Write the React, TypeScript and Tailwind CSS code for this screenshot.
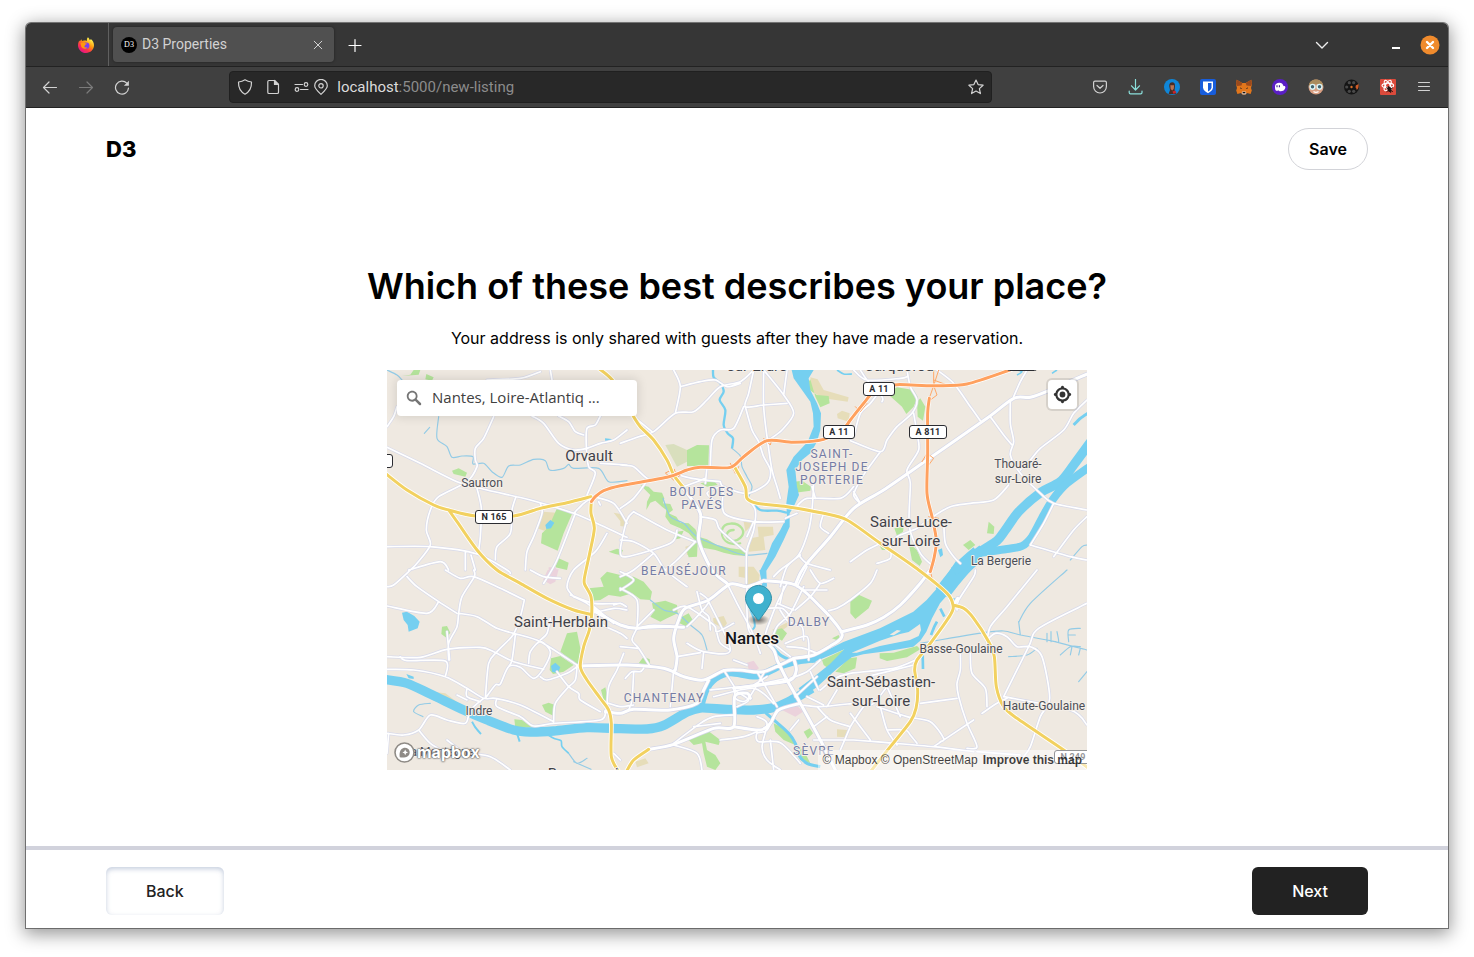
import { useState, type ReactNode } from "react";

/* Geometry of the map is drawn on a 2100 x 1200 grid, three units to a pixel. */

const parks: string[] = [
  "M45,18L95,14 100,0 80,0 70,14Z",
  "M118,12L140,22 135,32 115,28Z",
  "M195,302L215,295 240,308 235,320 200,312Z",
  "M510,415L555,432 530,490 512,542 462,520 465,490 485,470Z",
  "M515,565L545,578 540,600 505,592Z",
  "M665,545L690,536 708,540 702,556 685,552Z",
  "M900,240L930,225 966,226 964,288 900,288Z",
  "M760,345L785,350 800,365 825,368 832,385 828,400 850,402 858,420 845,430 868,440 880,458 905,460 925,478 935,500 960,508 990,525 1030,535 1075,540 1078,558 1040,555 1010,548 985,540 940,532 925,512 905,490 880,475 850,462 835,440 838,420 825,410 805,392 790,398 778,420 780,395 790,375Z",
  "M900,545L915,520 932,520 930,560 905,562Z",
  "M870,485L890,482 880,505 858,510Z",
  "M940,340L980,332 992,345 960,350Z",
  "M1270,28L1262,40 1268,60 1290,75 1325,78 1328,100 1300,112 1285,80Z",
  "M1222,335L1245,332 1272,350 1270,362 1225,368Z",
  "M1500,70L1530,52 1580,60 1592,80 1580,110 1558,132 1545,110Z",
  "M1590,95L1600,85 1615,110 1608,152 1592,140Z",
  "M1522,475L1550,470 1548,485 1530,497Z",
  "M1565,518L1590,540 1605,575 1598,588 1575,570 1570,545Z",
  "M1478,528L1495,525 1510,540 1485,540Z",
  "M1805,455L1822,470 1820,492 1800,490Z",
  "M1728,525L1750,510 1765,525 1745,540Z",
  "M605,655L650,650 640,625 660,605 700,615 740,620 770,635 795,665 790,690 760,688 735,670 700,680 665,675 640,690 615,692Z",
  "M795,700L835,692 870,705 872,730 840,745 820,755 790,740 800,725Z",
  "M885,740L905,730 920,755 895,768 878,760Z",
  "M165,770L180,768 190,788 178,803 163,792Z",
  "M540,790L570,785 580,835 575,885 550,870 520,845Z",
  "M492,865L520,858 560,885 530,905 498,912 488,900Z",
  "M465,1005L485,998 504,1005 500,1038 475,1025Z",
  "M382,1048L405,1050 435,1072 385,1075Z",
  "M642,960L655,952 665,995 650,990Z",
  "M755,880L770,860 788,868 790,888Z",
  "M1390,695L1415,674 1455,692 1445,715 1405,747 1390,730Z",
  "M1335,805L1355,795 1362,815Z",
  "M1305,870L1380,835 1365,865 1330,900 1310,885Z",
  "M1345,905L1385,865 1410,862 1405,895 1370,910Z",
  "M1478,850L1520,848 1590,828 1600,838 1560,862 1500,873 1478,865Z",
  "M1160,780L1185,775 1200,790 1185,812 1165,800Z",
  "M1160,1060L1190,1075 1215,1100 1225,1125 1190,1110 1165,1085Z",
  "M1250,1085L1268,1075 1278,1090 1262,1106Z",
  "M905,1110L940,1095 960,1080 980,1095 1000,1110 995,1125 955,1115 960,1140 985,1155 1000,1180 985,1200 960,1190 950,1150 945,1120 920,1125Z",
  "M1225,1145L1240,1130 1260,1160 1270,1180 1240,1170Z",
];

const sand: string[] = [
  "M470,425L508,428 500,455 485,470 472,482 450,475Z",
  "M1270,22L1292,28 1310,60 1385,82 1382,95 1310,85 1275,65Z",
  "M1350,132L1365,122 1388,130 1385,155 1352,145Z",
  "M1070,455L1095,458 1090,470 1075,485Z",
  "M1112,470L1158,470 1160,495 1130,500 1135,540 1085,545 1090,505 1115,500Z",
  "M680,428L700,432 720,450 720,465 705,460Z",
  "M700,445L725,450 715,470 700,468Z",
  "M895,530L930,520 928,555 900,555Z",
  "M1055,590L1100,590 1118,615 1115,640 1078,655 1080,625 1055,620Z",
  "M978,745L1010,738 1020,760 1010,775 980,760Z",
  "M1155,780L1205,755 1208,765 1180,785Z",
  "M135,965L175,970 215,1000 230,1012 190,1003 160,985Z",
  "M1350,1078L1380,1080 1378,1102 1350,1100Z",
  "M745,1175L775,1165 785,1180 750,1192Z",
];

const pinks: string[] = [
  "M482,600L515,598 505,635 490,643 468,630Z",
  "M1080,878L1100,872 1116,895 1105,903 1085,898Z",
  "M1185,1020L1225,1002 1248,1025 1225,1040Z",
  "M485,592L505,592 510,600 485,600Z",
];

const waterAreas: string[] = [
  "M475,465L490,450 502,458 492,475 478,477Z",
  "M654,205L680,208 668,217 655,217Z",
  "M45,728L60,725 82,738 98,755 92,775 65,785 62,765 50,750Z",
  "M58,912L80,920 80,927 65,925Z",
  "M492,888L505,878 520,892 512,910 495,905Z",
  "M1653,540L1665,535 1668,555 1660,562Z",
  "M1214,0L1280,0 1265,25 1270,60 1290,100 1302,130 1300,180 1290,215 1270,250 1245,270 1225,300 1230,350 1236,375 1220,410 1208,430 1208,470 1190,510 1165,560 1138,602 1140,650 1126,650 1120,600 1140,560 1155,520 1180,480 1200,440 1198,400 1205,350 1198,300 1220,260 1262,215 1280,170 1278,130 1270,95 1245,60 1220,25Z",
  "M1269,866L1369,816 1479,775 1579,725 1619,690 1659,645 1709,570 1769,570 1735,615 1699,655 1659,700 1635,745 1618,785 1600,812 1579,830 1509,842 1429,853 1394,862 1349,897 1289,952 1250,978 1235,955 1279,922 1329,882 1372,838 1330,856 1275,878Z",
];

const islands: string[] = [
  "M1394,848L1479,812 1539,792 1565,786 1599,762 1602,780 1595,798 1569,810 1479,828 1409,848Z",
  "M1508,794L1530,780 1542,782 1520,796Z",
];

const rivers: { d: string; w: number }[] = [
  { w: 28, d: "M-10,928L60,940 130,972 230,1020 300,1050 380,1080 430,1086 500,1083 600,1073 700,1076 780,1077 830,1066 900,1026 940,1014 1000,1017 1100,1020 1170,1010 1220,987 1275,955" },
  { w: 21, d: "M940,1014L957,960 985,925 1030,908 1110,918 1180,888 1240,872 1285,867" },
  { w: 48, d: "M1665,670L1700,625 1735,585 1775,550" },
  { w: 28, d: "M1700,605L1780,545 1830,512 1855,480 1895,425 1960,368 2020,335 2060,285 2115,210" },
  { w: 24, d: "M1770,550L1860,537 1905,528 1935,500 1970,435 2000,385 2040,340 2115,285" },
  { w: 8, d: "M1660,716L1672,740M1650,755L1642,770 1632,795M1607,850L1608,897M1700,705L1702,685" },
  { w: 9, d: "M2060,165L2080,145 2105,128M1780,530L1740,560" },
  { w: 9, d: "M1156,830L1180,855 1205,868M1135,1028L1170,1058 1205,1090 1225,1120 1235,1155 1260,1180 1300,1190" },
  { w: 7, d: "M978,0L980,22 1000,40 1010,65 998,90 1015,120 1010,165 1022,190 1038,205 1035,235M1090,390L1120,420 1170,422 1200,428" },
  { w: 6, d: "M1120,600L1130,650M1090,720L1100,745 1103,770 1090,785M255,1055L265,1072 282,1092M390,1090L398,1115" },
  { w: 5, d: "M480,1093L500,1105 522,1112 525,1130 545,1150M1890,0L1905,5 1890,15M1350,0L1370,12 1395,12M1995,10L2010,0" },
];

const streams =
  "M155,140L150,205 180,230 195,262 225,258 258,260 258,282 290,280 315,305 345,322 365,288 400,285 440,268 475,272 488,300 530,295 545,283 560,295 635,295 665,335 720,332" +
  "M112,190L128,172M1035,235L1060,258 1065,290 1080,320 1095,350 1085,380" +
  "M828,385L850,440 890,460 930,500 1000,530 1070,555 1140,550M790,690L830,720 870,730 910,765 945,795 960,840" +
  "M545,1150L570,1180 600,1165M560,1175L612,1198M130,1000L95,1005 80,1025 108,1040" +
  "M1600,820L1790,788 1850,783 1900,795 1990,812 2100,840M1895,755L1900,795M1895,757L1930,700 2040,600M1865,860L1920,855 1950,835" +
  "M1980,790L1980,815M1992,785L1992,815M2010,785L2015,815 2005,815M2045,815L2045,780 2080,775M2045,795L2065,795M2020,855L2050,830 2080,830M2050,855L2055,830M2075,855L2080,835M2075,935L2100,905" +
  "M0,0L30,15 45,30M2050,570L2085,530 2100,525";

const minorRoads: string[] = [
  "M0,170L20,140 30,110M320,140L290,205 265,235 265,270 270,290 240,335 155,380 130,420 118,480 130,525 90,580 70,600 20,645 0,650",
  "M0,232L100,280 210,335 300,360 430,390 560,430 640,465 720,502M270,355L283,415 280,500 275,540M387,380L375,420 370,490 330,530 325,570",
  "M460,400L465,430 440,500 420,545 415,600M0,530L130,530 270,552 360,600 370,610M65,600L160,575 185,600M235,545L235,600M252,555L265,600",
  "M435,138L470,160 515,220 560,240 600,235 640,220 680,210 720,180M515,138L545,155 565,185 590,195M640,138L625,165 600,175 598,230 605,290 625,310 600,375M640,280L720,285",
  "M300,30L400,25 460,5M490,0L495,30M620,380L680,400 720,460M635,395L640,405M560,430L590,400 612,385M565,430L510,570 470,640M660,490L625,545 560,600 540,650 560,680",
  "M175,600L220,625 260,620 340,655 412,690M260,600L262,620 225,680 215,730 210,770 185,820 185,870M60,620L90,650 155,695 210,730M0,708L120,730 155,695M215,730L270,740 330,775 380,790 460,815 570,885M0,860L100,862 180,838 280,832 320,845 380,875 470,898",
  "M412,690L400,740 378,795 330,845 305,880 295,985M385,795L375,870 365,890M40,860L60,872 175,873 175,920M0,898L80,900 175,920 240,955 290,985 325,985 400,1005 500,1055M180,785L188,870M430,600L470,620 520,625",
  "M330,985L330,1010 400,1040 440,1068 500,1060 640,1050 655,1020M290,985L250,1020 235,1060 180,1050 130,1035 95,1080 50,1095 0,1090M240,955L240,980 280,995M210,975L240,990M95,1080L130,1120 180,1150M5,1090L0,1150M180,1110L230,1145 310,1160 370,1200",
  "M295,985L325,945 340,942 365,890 400,892 440,925 470,895 490,845 460,815 430,845 425,880M460,920L480,930 540,910 570,890M510,905L545,950 575,970 580,990 640,1025M545,950L505,1000 500,1055M570,890L565,930 545,950",
  "M560,680L600,700 635,730 640,760 700,790 720,805M610,700L680,760M490,745L480,790 460,810M615,730L680,715 720,720M680,705L700,700 718,710M550,675L620,700 700,700",
  "M700,220L755,200 800,185 865,130 920,125 960,90 1000,50 1060,35 1100,0M740,140L795,185M860,0L880,50 865,130M880,50L940,35 985,30 1020,50 1060,40M700,285L740,290 790,330 860,315M700,415L740,385 775,340",
  "M1130,0L1130,110 1140,200 1155,300 1170,350 1180,385M1100,0L1085,70 1075,110 1130,105 1200,100M1075,110L1095,180 1115,215 1130,260 1150,300 1140,340 1080,370 1010,350 1000,335M970,290L975,210 1000,180 1040,175 1070,110M1130,0L1190,75 1220,130 1185,180 1145,210M1200,0L1190,75",
  "M1010,350L1012,430 1100,455 1190,455M860,310L915,325 1000,335M890,350L930,335 955,325M960,290L955,340M1000,350L960,370 1005,410M740,425L840,480 925,515M740,425L720,450 700,540 720,560 850,520 870,480M940,440L985,450 1000,480 1075,545",
  "M1080,385L1105,420 1100,480 1080,540 1078,600 1078,640M1100,455L1080,500M700,510L740,515 800,550 835,600 900,650M800,550L740,600 700,620M925,515L870,570 835,600M1225,415L1260,385 1360,385 1400,350M1280,340L1275,420 1265,480 1235,555 1180,600 1160,620M1275,350L1285,385",
  "M1310,430L1300,470 1325,490M1235,555L1260,580 1330,600M1400,365L1420,400M1195,445L1230,430M1240,555L1200,590 1180,650",
  "M1420,0L1440,30 1485,80 1485,95M1400,200L1420,130 1450,100 1480,60M1390,212L1480,245 1500,210 1530,170 1575,130 1590,90 1570,50 1560,0M1480,245L1440,300 1420,330 1400,375 1420,400M1580,130L1590,190 1595,240 1560,300 1570,340 1567,470 1600,550 1640,590",
  "M1650,0L1700,40 1750,110 1780,152M1870,90L1870,160 1880,215 1870,255 1900,310 1960,370 2000,400 2100,420M1810,140L1850,195 1875,225M2100,90L2060,130 2030,180 1960,235 1930,270 1900,300M1920,0L1900,35 1880,80M1865,345L1820,390 1750,400 1690,410 1630,445 1590,475 1530,500 1500,530",
  "M1670,450L1675,520 1700,560 1720,580M1930,525L2050,560 2100,570M2000,400L1970,460 1930,525M2000,560L2060,480 2100,440M1390,575L1440,540 1480,520M1400,0L1440,30 1540,25 1560,20M1510,530L1510,565 1470,580",
  "M1470,600L1450,640 1390,690 1350,715 1325,722M1765,600L1760,620 1715,690 1710,720M1950,600L1860,710 1810,770 1800,820M2100,700L1955,775 1925,830 1850,980M1800,810L1825,790 1860,800 1890,830 1930,830 1965,860 1988,985 1960,1040 1930,1130 1910,1160",
  "M1720,850L1720,900 1710,940 1715,980 1740,1060 1770,1130 1740,1135M1750,850L1755,910 1795,955 1800,1010M1785,1030L1830,1000 1860,985M1600,1000L1710,985M1760,1050L1640,1130M1470,1010L1560,1040 1630,1055 1670,1105 1660,1115M1850,980L2050,1020 2100,1065",
  "M1480,1010L1500,1080 1530,1125M1500,1080L1555,1080 1570,1095 1590,1120M1390,1030L1450,1110M1400,1110L1500,1118 1640,1130 1760,1145M1390,1070L1430,1010 1460,1000 1500,950M1300,960L1345,925 1390,910 1520,895 1590,868M1440,920L1580,885M1500,950L1540,1040M1770,1145L1900,1155",
  "M750,775L735,810 755,835 790,890M700,655L750,690 750,775M700,830L755,835M750,775L870,770M800,720L750,770M900,770L930,740 965,695 940,670M860,720L900,710 980,765 990,785 1040,760M930,665L945,720 965,740 970,780M965,695L1030,840 950,845 900,820",
  "M1020,640L1050,700 1095,785 1120,850M950,845L945,895M870,860L940,848M1080,655L1080,725 1090,790 1160,825M1040,870L1080,885M1200,640L1170,700 1150,750 1135,800 1165,825M1250,650L1210,730 1170,770 1150,820M1140,715L1185,715 1210,740M1170,700L1220,720",
  "M1195,820L1260,800 1265,870M1200,830L1250,835 1290,850M1165,825L1210,860M1030,840L1000,820 990,790M970,960L1100,945 1200,925M980,980L1100,955 1160,1000M1040,960L1085,990 1050,1010M1110,905L1150,975 1170,1010M1100,945L1140,920M1130,910L1080,990 1045,985 1045,960",
  "M1045,955L1010,900M1210,925L1260,905 1300,870M1225,980L1290,920M1270,905L1295,960M1260,980L1310,1005M1170,1020L1140,1080 1110,1090 1115,1115 1180,1118 1240,1180M1110,1040L1140,1060 1125,1130 1140,1170 1180,1200M860,1120L940,1060 980,1040 1040,1035M920,1070L1000,1060",
  "M1245,1005L1300,1010 1400,1000M1290,1010L1330,1050 1390,1070M1280,1070L1320,1040M1280,1110L1400,1110M1350,960L1320,1010M1390,1070L1360,1140M1235,1050L1210,1080M1150,1110L1160,1200M860,1125L930,1150 945,1200M1000,1110L1070,1100 1110,1085M700,1170L680,1150",
  "M715,925L735,905 760,905 770,895M740,905L735,990 725,1020M660,1020L665,950 690,900 710,850M665,1000L700,1010 740,1005M850,1010L860,900M700,605L740,630 700,660",
  "M1260,590L1230,650M1270,600L1300,640 1340,625M1300,640L1270,680 1225,720M1245,660L1320,660M1179,720L1205,755 1245,770 1250,810M1190,650L1179,700",
];

const majorRoads =
  "M2105,10L1990,60 1930,82 1880,85 1800,145 1620,270 1490,360 1400,415 1330,500 1260,580 1240,610 1225,645" +
  "M1130,632L1080,650 1030,642 965,690 895,715 875,750 860,805 870,860 865,900" +
  "M1130,632L1225,645 1300,710 1360,780 1362,805 1330,828 1280,855 1220,865M1362,786L1440,765 1490,742 1540,705 1600,640 1625,605" +
  "M885,350L940,430 935,510 975,600 1020,640M620,722L700,765 750,775 800,768 890,772" +
  "M570,888L720,885 830,895 890,920 950,930 1010,902 1060,900 1130,905 1220,865" +
  "M1170,870L1200,930 1240,1000 1300,1110 1345,1200M1220,865L1228,900 1210,930 1120,945 1040,955" +
  "M655,1025L700,1030 740,1018 850,1020 930,1000 950,960 965,930M1170,870L1160,840 1130,810" +
  "M785,1138L860,1123 980,1075 1040,1070 1043,980 1080,970 1090,985M1040,1070L1120,1080 1150,1060 1175,1020 1240,1000M1700,705L1712,685";

const yellowRoads =
  "M-5,310L60,360 140,405 185,420 265,438 380,438 460,415 540,398 612,380" +
  "M185,420L210,455 270,540 330,600 400,640 480,685 560,720 612,733" +
  "M613,395L612,430 622,475 608,550 595,610 592,640 612,680 614,733 607,780 590,830 580,890 600,930 640,985 665,1020 673,1060 673,1160 695,1205" +
  "M635,-5L680,35 740,140 760,170 800,210 840,270 860,315 887,350" +
  "M1045,295L1075,350 1080,385 1110,400 1200,410 1310,430 1380,450 1480,520 1595,600 1680,670 1698,705 1690,735 1630,820 1590,870 1583,900 1592,960 1587,1015 1570,1055 1510,1130 1450,1205" +
  "M1698,705L1730,715 1760,745 1805,815 1822,860 1828,950 1850,1010 1890,1045 2030,1140 2105,1195M718,1205L740,1170 785,1138";

const orangeRoads =
  "M613,395L625,380 650,362 700,347 840,322 900,300 940,292 1030,292 1070,260 1140,212 1220,217 1310,208 1370,175 1390,150 1430,100 1470,55 1530,44 1640,47 1740,42 1875,-2" +
  "M1627,85L1622,130 1622,250 1620,370 1635,440 1648,510 1642,560 1630,605";

const ramps =
  "M1640,0L1640,47 1625,90M1655,0L1640,47 1650,75 1630,90M1640,30L1680,45M836,310L860,330 880,315 855,300ZM862,298L870,335M1030,280L1045,310 1055,290M1130,205L1150,225 1155,205M1605,275L1620,250 1640,265 1625,285M1625,440L1655,445 1635,460M1405,110L1420,125 1440,100M1630,600L1635,625";

/* Rounds the corners of "Mx,yLx,y x,y" runs with a spline through every point. */
function smooth(d: string): string {
  return d
    .split("M")
    .filter(Boolean)
    .map((run) => {
      const p = run
        .replace("Z", "")
        .split(/[L ]/)
        .filter(Boolean)
        .map((s) => s.split(",").map(Number));
      let out = `M${p[0][0]},${p[0][1]}`;
      for (let i = 0; i < p.length - 1; i++) {
        const a = p[i - 1] ?? p[i];
        const b = p[i];
        const c = p[i + 1];
        const e = p[i + 2] ?? c;
        const k = 7;
        out += `C${b[0] + (c[0] - a[0]) / k},${b[1] + (c[1] - a[1]) / k} ${c[0] - (e[0] - b[0]) / k},${c[1] - (e[1] - b[1]) / k} ${c[0]},${c[1]}`;
      }
      return out;
    })
    .join("");
}

const minor = smooth(minorRoads.join(""));
const major = smooth(majorRoads);
const yellow = smooth(yellowRoads);
const orange = smooth(orangeRoads);

interface Label {
  x: number;
  y: number;
  lines: string[];
  kind: "town" | "village" | "district" | "city";
}

const labels: Label[] = [
  { x: 202, y: 91, lines: ["Orvault"], kind: "town" },
  { x: 174, y: 257, lines: ["Saint-Herblain"], kind: "town" },
  { x: 524, y: 157, lines: ["Sainte-Luce-", "sur-Loire"], kind: "town" },
  { x: 494, y: 317, lines: ["Saint-Sébastien-", "sur-Loire"], kind: "town" },
  { x: 370, y: 1, lines: ["sur-Erdre"], kind: "town" },
  { x: 512, y: 1, lines: ["Carquefou"], kind: "town" },
  { x: 200, y: 409, lines: ["Bouguenais"], kind: "town" },
  { x: 95, y: 117, lines: ["Sautron"], kind: "village" },
  { x: 92, y: 345, lines: ["Indre"], kind: "village" },
  { x: 52, y: 386, lines: ["La Montagne"], kind: "village" },
  { x: 631, y: 98, lines: ["Thouaré-", "sur-Loire"], kind: "village" },
  { x: 614, y: 195, lines: ["La Bergerie"], kind: "village" },
  { x: 574, y: 283, lines: ["Basse-Goulaine"], kind: "village" },
  { x: 657, y: 340, lines: ["Haute-Goulaine"], kind: "village" },
  { x: 315, y: 126, lines: ["BOUT DES", "PAVÉS"], kind: "district" },
  { x: 445, y: 88, lines: ["SAINT-", "JOSEPH DE", "PORTERIE"], kind: "district" },
  { x: 297, y: 205, lines: ["BEAUSÉJOUR"], kind: "district" },
  { x: 422, y: 256, lines: ["DALBY"], kind: "district" },
  { x: 277, y: 332, lines: ["CHANTENAY"], kind: "district" },
  { x: 427, y: 385, lines: ["SÈVRE"], kind: "district" },
  { x: 365, y: 274, lines: ["Nantes"], kind: "city" },
];

const labelStyles: Record<Label["kind"], { cls: string; leading: number }> = {
  town: { cls: "fill-[#3f4148] text-[15px]", leading: 19 },
  village: { cls: "fill-[#4c4e56] text-[12px]", leading: 15 },
  district: { cls: "fill-[#747ca5] text-[12px] tracking-widest", leading: 13 },
  city: { cls: "fill-[#15161a] text-[17px] font-medium", leading: 20 },
};

const shields = [
  { x: 107, y: 147, w: 37, text: "N 165" },
  { x: 492, y: 19, w: 31, text: "A 11" },
  { x: 452, y: 62, w: 31, text: "A 11" },
  { x: 541, y: 62, w: 37, text: "A 811" },
  { x: -10, y: 91, w: 31, text: "" },
  { x: 635, y: -6, w: 30, text: "" },
  { x: 686, y: 387, w: 37, text: "N 249" },
];

function MapCanvas() {
  return (
    <svg viewBox="0 0 700 400" className="block h-full w-full bg-[#efe9e1]" role="img" aria-label="Map of Nantes" preserveAspectRatio="xMidYMid slice">
      <svg width="700" height="400" viewBox="0 0 2100 1200" fill="none" strokeLinejoin="round" strokeLinecap="round">
        <path d={sand.join("")} fill="#e6ddb9" />
        <path d={parks.join("")} fill="#b5e49c" />
        <path d={pinks.join("")} fill="#ebd2dc" />
        <path d="M835,225L860,222 900,240 900,275 870,290Z" fill="#d9dfbd" />
        <path d="M1005,480C1010,455 1050,455 1065,475C1078,495 1050,520 1030,510C1010,500 1020,480 1040,480" stroke="#b5e49c" strokeWidth="7" />
        <path d="M1005,480C1000,505 1020,530 1060,520" stroke="#b5e49c" strokeWidth="6" />
        <path d={smooth(streams)} stroke="#93cbe6" strokeWidth="3.5" />
        <path d={waterAreas.join("")} fill="#75cff0" />
        {rivers.map((r) => (
          <path key={r.d} d={smooth(r.d)} stroke="#75cff0" strokeWidth={r.w} strokeLinecap="butt" />
        ))}
        <path d={islands.join("")} fill="#efe9e1" />
        <path d={minor} stroke="#d8daea" strokeWidth="9" />
        <path d={major} stroke="#d3d6e8" strokeWidth="13" />
        <path d={minor} stroke="#fff" strokeWidth="5" />
        <path d={major} stroke="#fff" strokeWidth="9" />
        <path d={ramps} stroke="#ffa868" strokeWidth="3" />
        <path d={yellow} stroke="#fff" strokeWidth="14" />
        <path d={yellow} stroke="#f2d160" strokeWidth="9" />
        <path d={orange} stroke="#fff" strokeWidth="13" />
        <path d={orange} stroke="#ffa15f" strokeWidth="9" />
      </svg>
      <g className="font-['Roboto','Liberation_Sans',sans-serif]" textAnchor="middle">
        {labels.map((l) => (
          <text key={l.lines.join()} className={labelStyles[l.kind].cls} stroke="#f4efe9" strokeWidth="2" strokeLinejoin="round" paintOrder="stroke">
            {l.lines.map((line, i) => (
              <tspan key={line} x={l.x} y={l.y + i * labelStyles[l.kind].leading}>
                {line}
              </tspan>
            ))}
          </text>
        ))}
        {shields.map((s) => (
          <g key={`${s.x}-${s.y}`}>
            <rect x={s.x - s.w / 2} y={s.y - 6.5} width={s.w} height="13" rx="2.5" fill="#fff" stroke="#2b2c31" />
            <text x={s.x} y={s.y + 3} className="fill-[#2b2c31] text-[9px] font-bold tracking-wide">
              {s.text}
            </text>
          </g>
        ))}
      </g>
      <defs>
        <radialGradient id="pin-shadow">
          <stop offset="0.1" stopOpacity="0.5" />
          <stop offset="1" stopOpacity="0" />
        </radialGradient>
      </defs>
      <g transform="translate(358 215)">
        <ellipse cx="13.5" cy="34.8" rx="11" ry="5.5" fill="url(#pin-shadow)" />
        <path fill="#3fb1ce" stroke="#3190a8" d="M26.5,13.5C26.5,19 20.2,26.8 14.7,34.2C14,35.2 13,35.2 12.3,34.2C6.8,26.8 .5,19.2 .5,13.5C.5,6.3 6.3,.5 13.5,.5S26.5,6.3 26.5,13.5Z" />
        <circle cx="13.5" cy="13.5" r="5.5" fill="#fff" />
      </g>
    </svg>
  );
}

function Glyph({ children }: { children: ReactNode }) {
  return (
    <svg viewBox="0 0 16 16" className="size-4 shrink-0" fill="none" stroke="currentColor" strokeWidth="1.2" strokeLinecap="round" strokeLinejoin="round" aria-hidden="true">
      {children}
    </svg>
  );
}

function FirefoxLogo() {
  return (
    <svg viewBox="0 0 16 16" className="size-4" aria-hidden="true">
      <defs>
        <linearGradient id="fx" x1="0.85" y1="0.1" x2="0.25" y2="0.95">
          <stop offset="0.05" stopColor="#fff44f" />
          <stop offset="0.4" stopColor="#ff980e" />
          <stop offset="0.7" stopColor="#ff3647" />
          <stop offset="1" stopColor="#e31587" />
        </linearGradient>
      </defs>
      <path fill="url(#fx)" d="M10 .2c1 .9 1.6 2 1.800 3 .8-.3 1-.9 1-1.100C14.800 3.700 16 5.900 16 8.300 16 12.600 12.400 16 8 16S0 12.500 0 8.200c0-1.900.7-3.600 1.500-4.600l.3 1c.5-.8 1-1.500 1.400-2.400.3.9.8 1.500 1.400 1.900C6 3.300 8 3.600 9 4c-.3-1.400 0-2.800 1-3.800Z" />
      <circle cx="8.2" cy="8.6" r="3.2" fill="#7b3ff2" />
      <path fill="#ff980e" d="M2.500 6.200C4 5 6 5.200 7.200 6.300L9 6.600c-.2 1-1.500 1-1.900 1.300-.4.7-.3 1.500-1 1.900.7.9 2 1 3.300.4C8 12.500 4.500 12 3.300 9.800Z" />
    </svg>
  );
}

const extensions: { name: string; art: ReactNode }[] = [
  {
    name: "Profile",
    art: (
      <>
        <circle cx="8" cy="8" r="8" fill="#0f86d8" />
        <path d="M4.500 15.200 6 11 5.200 7c0-2.800 1.400-3.800 3-3.800s3 1 2.800 3.800L10.600 11l1.400 4Z" fill="#4b2d25" />
        <path d="M6.300 6.200h3.800L9.700 10 8.200 11.500 6.700 10Z" fill="#b87455" />
        <path d="M8.500 12.500 11 11.500l1.500 2-3 1.500Z" fill="#c9252b" />
      </>
    ),
  },
  {
    name: "Password manager",
    art: (
      <>
        <rect width="16" height="16" rx="2" fill="#175ddc" />
        <path d="M3 2.500h10v5.800c0 2.900-2.500 4.600-5 5.900-2.500-1.300-5-3-5-5.900Z" fill="#fff" />
        <path d="M8 4h3.500v4.300c0 2-1.800 3.200-3.500 4.200Z" fill="#175ddc" />
      </>
    ),
  },
  {
    name: "Wallet",
    art: (
      <>
        <path d="M.7.8 6.300 4h3.400L15.300.8 16 5l-1 4 .8 2.500-1.200 3.500-3.600-1-1.500 1.500h-3L5 14l-3.600 1L.2 11.500 1 9 0 5Z" fill="#e2761b" />
        <path d="M.7.8 6.300 4 5.500 6.500 1.200 7 0 5ZM15.300.8 9.700 4l.8 2.500 4.300.5L16 5Z" fill="#9b4a1d" />
        <path d="m4 8.300 2.200 1.200L4.700 10ZM12 8.300 9.800 9.500l1.500.5Z" fill="#3b2a24" />
        <path d="M6 12.500h4l.3 2-1 1H6.700l-1-1Z" fill="#d7c1b3" />
        <path d="M6.700 13h2.600v1.300H6.700Z" fill="#161616" />
      </>
    ),
  },
  {
    name: "Ghost",
    art: (
      <>
        <circle cx="8" cy="8" r="8" fill="#5a1fc4" />
        <path d="M3 7.500C3 5 5 3.800 7.300 3.800c2.600 0 3.900 1.700 4.300 3.400.8-.3 2.200.2 1.700 1.800-.5 2-2.600 3.400-5 3.300-.9 0-1.200-.8-2-.8s-1.400.6-2.200.2C3 11 3 9 3 7.500Z" fill="#fff" />
        <path d="M5 6.300v2M7.400 6.300v2" stroke="#3c1594" strokeWidth="1.1" />
      </>
    ),
  },
  {
    name: "Avatar",
    art: (
      <>
        <circle cx="8" cy="8" r="7.500" fill="#d99f83" />
        <path d="M.8 7C1 3 4 .6 8 .6S15 3 15.200 7L12 5 4 5.500Z" fill="#a98b5d" />
        <circle cx="4.5" cy="7.8" r="2.4" fill="#44636e" stroke="#d8f3f5" strokeWidth="1.4" />
        <circle cx="11.5" cy="7.8" r="2.4" fill="#44636e" stroke="#d8f3f5" strokeWidth="1.4" />
        <path d="M5.500 12.500c1.500 1 3.500 1 5 0" stroke="#fff" strokeWidth="1.2" fill="none" />
      </>
    ),
  },
  {
    name: "Film reel",
    art: (
      <>
        <circle cx="7.5" cy="8" r="7.5" fill="#151515" />
        <g fill="#4a4a4a">
          <circle cx="5.3" cy="3.7" r="1.6" />
          <circle cx="9.7" cy="3.7" r="1.6" />
          <circle cx="2.7" cy="8" r="1.6" />
          <circle cx="5.3" cy="12.3" r="1.6" />
          <circle cx="9.7" cy="12.3" r="1.6" />
        </g>
        <circle cx="7.5" cy="8" r="1.2" fill="#d8702a" />
        <path d="M12 6c1 .5 2-.5 2.300-1.500.8 2.500.2 5-1.500 6.500 0-1.500-1.300-2-1.300-3Z" fill="#d05c28" />
      </>
    ),
  },
  {
    name: "React tools",
    art: (
      <>
        <rect width="16" height="16" rx="1" fill="#db4a3b" />
        <g fill="none" stroke="#fff" strokeWidth="1.2">
          <ellipse cx="7.8" cy="6.5" rx="5.8" ry="2.3" />
          <ellipse cx="7.8" cy="6.5" rx="5.8" ry="2.3" transform="rotate(60 7.8 6.5)" />
          <ellipse cx="7.8" cy="6.5" rx="5.8" ry="2.3" transform="rotate(120 7.8 6.5)" />
        </g>
        <ellipse cx="9.5" cy="10.3" rx="2" ry="2.8" fill="#26120f" transform="rotate(-25 9.5 10.3)" />
        <path d="m6 8.500 7 4.300M6.500 12.800 13 8.500M8.500 7l2.300 7" stroke="#26120f" strokeWidth="0.8" />
      </>
    ),
  },
];

function BrowserChrome() {
  return (
    <div className="font-['Roboto','Liberation_Sans',sans-serif] text-[#d2d2d2]">
      <div className="flex h-11 items-stretch border-b border-[#222] bg-[#363636]">
        <div className="flex w-[83px] items-center justify-end border-r border-[#606060] pr-[14px]">
          <FirefoxLogo />
        </div>
        <div className="my-1 ml-1 flex w-[221px] items-center rounded-[4px] bg-[#505050] px-2 shadow-[0_0_3px_rgba(0,0,0,0.4)]">
          <span className="flex size-4 items-center justify-center rounded-full bg-black font-['Liberation_Serif',serif] text-[8px] text-white">D3</span>
          <span className="ml-[5px] flex-1 text-[14px]">D3 Properties</span>
          <button type="button" aria-label="Close tab" className="flex size-4 items-center justify-center">
            <Glyph>
              <path d="m4.200 4.200 7.600 7.600M11.800 4.200l-7.600 7.600" strokeWidth="1" />
            </Glyph>
          </button>
        </div>
        <button type="button" aria-label="New tab" className="ml-[13px] flex w-4 items-center justify-center text-white">
          <Glyph>
            <path d="M8 2.500v12M2 8.500h12" />
          </Glyph>
        </button>
        <div className="flex-1" />
        <button type="button" aria-label="List all tabs" className="flex w-4 items-center text-[#eee]">
          <Glyph>
            <path d="m2.500 5.500 5.500 5.500 5.500-5.500" strokeWidth="1.4" />
          </Glyph>
        </button>
        <button type="button" aria-label="Minimize" className="ml-[58px] flex w-4 items-center text-white">
          <Glyph>
            <path d="M4 11h8" strokeWidth="2" strokeLinecap="butt" />
          </Glyph>
        </button>
        <button type="button" aria-label="Close window" className="mr-2 ml-4 flex w-5 items-center">
          <svg viewBox="0 0 20 20" className="size-5" aria-hidden="true">
            <circle cx="10" cy="10" r="9.500" fill="#f08b2d" />
            <path d="m7 7 6 6M13 7l-6 6" stroke="#fff" strokeWidth="2.4" strokeLinecap="round" />
          </svg>
        </button>
      </div>
      <div className="flex h-[41px] items-center border-b border-[#222] bg-[#404040]">
        <div className="flex flex-[187] items-center gap-5 pl-4">
          <button type="button" aria-label="Go back">
            <Glyph>
              <path d="M14.500 8.500H1.800M7 3 1.500 8.500 7 14" />
            </Glyph>
          </button>
          <button type="button" aria-label="Go forward" className="text-[#7b7b7b]">
            <Glyph>
              <path d="M1.500 8.500h12.700M9 3l5.500 5.500L9 14" />
            </Glyph>
          </button>
          <button type="button" aria-label="Reload">
            <Glyph>
              <path d="M14.500 9A6.500 6.500 0 1 1 12.800 4.200" />
              <path d="M14.900 1.800v5H9.900Z" fill="currentColor" stroke="none" />
            </Glyph>
          </button>
        </div>
        <label className="flex h-8 min-w-0 flex-[746] items-center gap-3 rounded-[4px] border border-[#202020] bg-[#282828] px-[7px]">
          <Glyph>
            <path d="M8 .8c1.900 1.300 4 2 6.500 2.200.2 5.600-1.300 9.400-6.500 12.200C2.800 12.400 1.300 8.600 1.500 3 4 2.800 6.100 2.100 8 .8Z" />
          </Glyph>
          <Glyph>
            <path d="M4 1.500h5.500l4 4v7.700c0 .8-.5 1.300-1.300 1.300H4c-.8 0-1.200-.5-1.200-1.300V2.800c0-.8.4-1.300 1.200-1.300Z" />
            <path d="M9.500 1.500v4h4Z" fill="currentColor" />
          </Glyph>
          <span className="flex gap-1">
            <Glyph>
              <path d="M2 5.500h7.500M7.500 10.500H15" />
              <circle cx="13" cy="5.500" r="1.800" />
              <circle cx="4" cy="10.500" r="1.800" />
            </Glyph>
            <Glyph>
              <path d="M8 15.300C4.500 12 1.700 9.500 1.700 6.700a6.300 6.300 0 0 1 12.600 0c0 2.800-2.800 5.300-6.300 8.600Z" />
              <circle cx="8" cy="6.800" r="2.200" />
            </Glyph>
          </span>
          <a href="#address" className="-ml-1 flex-1 text-[15px] text-[#8c8c8c]">
            <span className="text-[#dcdcdc]">localhost</span>:5000/new-listing
          </a>
          <button type="button" aria-label="Bookmark this page">
            <Glyph>
              <path d="m8 1 2.100 4.600 5 .6-3.700 3.400 1 5L8 12.100l-4.400 2.500 1-5L.9 6.200l5-.6Z" />
            </Glyph>
          </button>
        </label>
        <div className="flex flex-[439] items-center justify-end gap-5 pr-4">
          <button type="button" aria-label="Pocket">
            <Glyph>
              <path d="M3 2.200h10c.9 0 1.400.5 1.400 1.400v4a6.400 6.400 0 0 1-12.800 0v-4c0-.9.5-1.400 1.400-1.400ZM5 6.500l3 2.800 3-2.800" />
            </Glyph>
          </button>
          <button type="button" aria-label="Downloads" className="text-[#8be0dc]">
            <Glyph>
              <path d="M7.500 .5v10.300M3.500 6.800l4 4.200 4-4.200M1.200 12v1.500c0 .8.500 1.300 1.300 1.300h10.200c.8 0 1.300-.5 1.300-1.300V12" />
            </Glyph>
          </button>
          {extensions.map((e) => (
            <button key={e.name} type="button" aria-label={e.name}>
              <svg viewBox="0 0 16 16" className="size-4" aria-hidden="true">
                {e.art}
              </svg>
            </button>
          ))}
          <button type="button" aria-label="Open application menu">
            <Glyph>
              <path d="M2.500 3.500h11M2.500 7.500h11M2.500 11.500h11" strokeWidth="1" />
            </Glyph>
          </button>
        </div>
      </div>
    </div>
  );
}

function MapPicker() {
  const [query, setQuery] = useState("Nantes, Loire-Atlantiq ...");
  return (
    <div className="relative mt-5 h-[400px] w-full max-w-[700px] overflow-hidden">
      <MapCanvas />
      <label className="absolute top-[10px] left-[10px] flex h-9 w-[240px] items-center rounded-[4px] bg-white pl-[7px] shadow-[0_0_10px_2px_rgba(0,0,0,0.1)]">
        <svg viewBox="0 0 18 18" className="size-5 fill-[#757575]" aria-hidden="true">
          <path d="M7.400 2.500c-2.700 0-4.900 2.200-4.900 4.900s2.200 4.900 4.900 4.900c1 0 1.800-.2 2.500-.8l3.700 3.700c.2.2.4.3.8.3.7 0 1.100-.4 1.100-1.100 0-.3-.1-.5-.3-.8L11.400 10c.4-.8.8-1.600.8-2.500.1-2.800-2.100-5-4.800-5zm0 1.600c1.800 0 3.200 1.400 3.200 3.200s-1.400 3.200-3.200 3.200-3.300-1.300-3.300-3.100 1.400-3.300 3.300-3.300z" />
        </svg>
        <input
          type="text"
          aria-label="Search for an address"
          value={query}
          onChange={(e) => setQuery(e.target.value)}
          className="ml-2 min-w-0 flex-1 bg-transparent font-['Open_Sans',sans-serif] text-[15px] text-[#404040] outline-none"
        />
      </label>
      <button
        type="button"
        aria-label="Find my location"
        className="absolute top-[10px] right-[10px] flex size-[29px] items-center justify-center rounded-[4px] bg-white shadow-[0_0_0_2px_rgba(0,0,0,0.1)]"
      >
        <svg viewBox="0 0 20 20" className="size-[29px] fill-[#333]" aria-hidden="true">
          <path d="M10 4C9 4 9 5 9 5v.1A5 5 0 0 0 5.100 9H5s-1 0-1 1 1 1 1 1h.1A5 5 0 0 0 9 14.900v.1s0 1 1 1 1-1 1-1v-.1a5 5 0 0 0 3.900-3.900h.1s1 0 1-1-1-1-1-1h-.1A5 5 0 0 0 11 5.100V5s0-1-1-1zm0 2.500a3.500 3.500 0 1 1 0 7 3.500 3.500 0 1 1 0-7z" />
          <circle cx="10" cy="10" r="2" />
        </svg>
      </button>
      <a href="#mapbox" className="absolute bottom-[7px] left-[7px] flex items-center gap-0.5 font-['Inter',sans-serif] text-[16px] leading-5 font-bold text-white [text-shadow:0_0_1px_#666,0_0_2px_#666,0_0_2px_#666]">
        <svg viewBox="0 0 21 21" className="size-[21px]" aria-hidden="true">
          <circle cx="10.5" cy="10.5" r="9.5" fill="#fff" stroke="#8f8b86" strokeWidth="1.6" />
          <path d="M5.800 15.300C5 11 6 7.500 9 6.200c2.800-1.200 6 .3 6.600 3.200.6 3-1.500 5.200-4.100 5.800-1.800.4-4 .4-5.700.1Z" fill="#8f8b86" />
          <path d="m11.200 7.600.9 1.900 1.900.9-1.900.9-.9 1.900-.9-1.900-1.900-.9 1.900-.9Z" fill="#fff" />
        </svg>
        mapbox
      </a>
      <div className="absolute right-0 bottom-0 flex h-5 items-center gap-[5px] bg-white/50 px-[5px] font-['Liberation_Sans',sans-serif] text-[12px] text-black/75">
        <span>
          <a href="#about-mapbox">© Mapbox</a> <a href="#openstreetmap">© OpenStreetMap</a>
        </span>
        <a href="#improve" className="font-bold">
          Improve this map
        </a>
      </div>
    </div>
  );
}

export default function App() {
  return (
    <div className="flex min-h-screen flex-col bg-white px-[26px] pt-[23px] pb-[29px]">
      <div className="flex flex-1 flex-col overflow-hidden rounded-t-[5px] shadow-[0_0_0_1px_rgba(90,90,90,0.8),0_4px_18px_2px_rgba(0,0,0,0.42)]">
        <BrowserChrome />
        <div className="flex flex-1 flex-col bg-white font-['Inter',sans-serif] text-black">
          <header className="flex items-center justify-between px-20 py-5">
            <a href="#home" className="text-[22px] leading-7 font-extrabold">
              D3
            </a>
            <button type="button" className="h-[42px] rounded-full border border-[#d2d3d8] px-5 text-[16px] font-semibold">
              Save
            </button>
          </header>
          <main className="flex flex-1 flex-col items-center justify-center px-4 pb-px">
            <h1 className="text-center text-[36px] leading-10 font-semibold">Which of these best describes your place?</h1>
            <p className="mt-5 text-center text-[16px] leading-6">Your address is only shared with guests after they have made a reservation.</p>
            <MapPicker />
          </main>
          <footer className="flex items-center justify-between border-t-4 border-[#d1d2dc] px-20 pt-[17px] pb-[13px] text-[16px] font-medium">
            <button type="button" className="h-12 rounded-md px-10 text-[#222] shadow-[inset_0_2px_5px_rgba(150,165,195,0.55)]">
              Back
            </button>
            <button type="button" className="h-12 rounded-md bg-[#222] px-10 text-white">
              Next
            </button>
          </footer>
        </div>
      </div>
    </div>
  );
}
